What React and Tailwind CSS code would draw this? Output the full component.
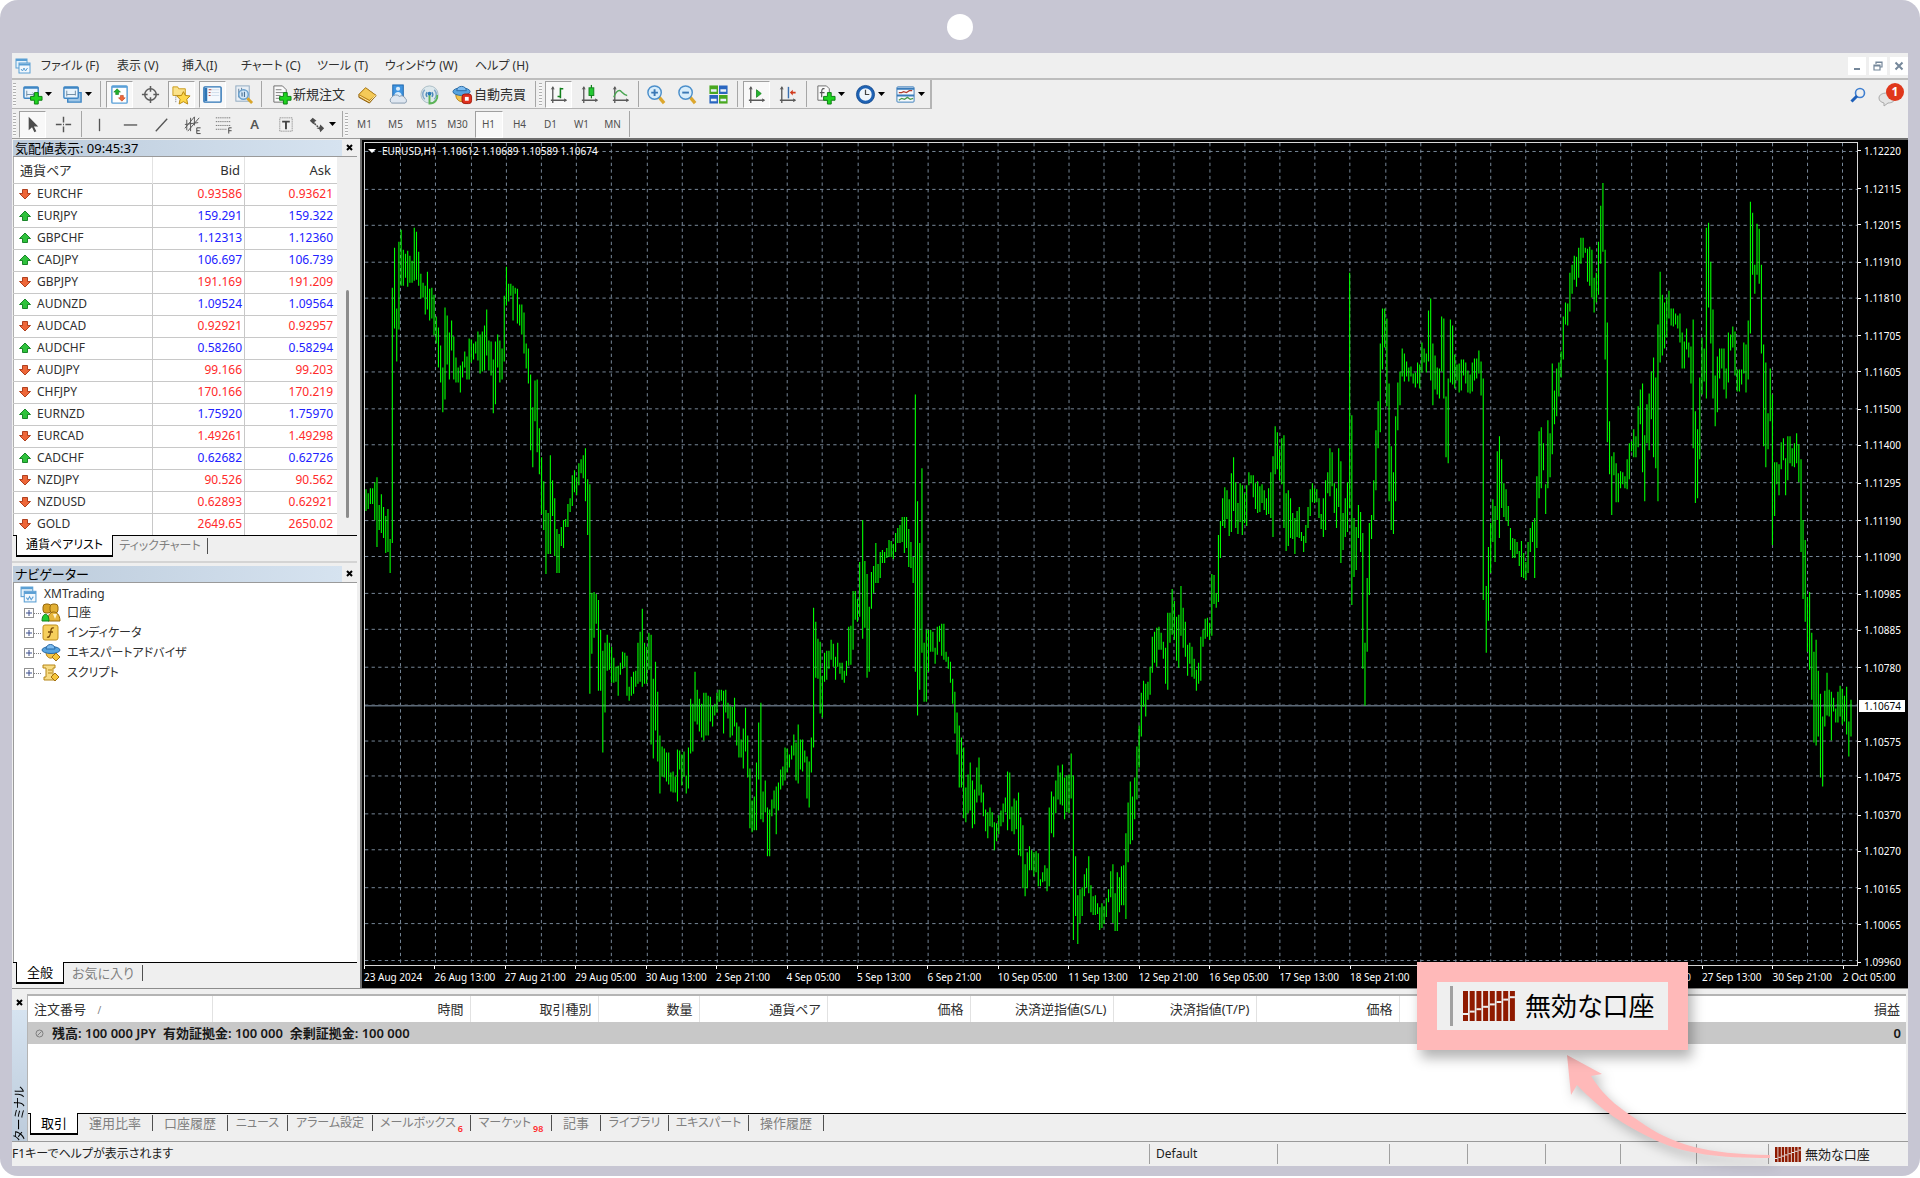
import React, { useState } from 'react';
import clsx from 'clsx';

const quotes = [
  { symbol: 'EURCHF', bid: '0.93586', ask: '0.93621', up: false },
  { symbol: 'EURJPY', bid: '159.291', ask: '159.322', up: true },
  { symbol: 'GBPCHF', bid: '1.12313', ask: '1.12360', up: true },
  { symbol: 'CADJPY', bid: '106.697', ask: '106.739', up: true },
  { symbol: 'GBPJPY', bid: '191.169', ask: '191.209', up: false },
  { symbol: 'AUDNZD', bid: '1.09524', ask: '1.09564', up: true },
  { symbol: 'AUDCAD', bid: '0.92921', ask: '0.92957', up: false },
  { symbol: 'AUDCHF', bid: '0.58260', ask: '0.58294', up: true },
  { symbol: 'AUDJPY', bid: '99.166', ask: '99.203', up: false },
  { symbol: 'CHFJPY', bid: '170.166', ask: '170.219', up: false },
  { symbol: 'EURNZD', bid: '1.75920', ask: '1.75970', up: true },
  { symbol: 'EURCAD', bid: '1.49261', ask: '1.49298', up: false },
  { symbol: 'CADCHF', bid: '0.62682', ask: '0.62726', up: true },
  { symbol: 'NZDJPY', bid: '90.526', ask: '90.562', up: false },
  { symbol: 'NZDUSD', bid: '0.62893', ask: '0.62921', up: false },
  { symbol: 'GOLD', bid: '2649.65', ask: '2650.02', up: false },
];

const prices = [
  1.1222, 1.12115, 1.12015, 1.1191, 1.1181, 1.11705, 1.11605, 1.115, 1.114, 1.11295, 1.1119, 1.1109,
  1.10985, 1.10885, 1.1078, 1.10675, 1.10575, 1.10475, 1.1037, 1.1027, 1.10165, 1.10065, 1.0996,
];

const times = [
  '23 Aug 2024', '26 Aug 13:00', '27 Aug 21:00', '29 Aug 05:00', '30 Aug 13:00', '2 Sep 21:00',
  '4 Sep 05:00', '5 Sep 13:00', '6 Sep 21:00', '10 Sep 05:00', '11 Sep 13:00', '12 Sep 21:00',
  '16 Sep 05:00', '17 Sep 13:00', '18 Sep 21:00', '20 Sep 05:00', '23 Sep 13:00', '24 Sep 21:00',
  '26 Sep 05:00', '27 Sep 13:00', '30 Sep 21:00', '2 Oct 05:00',
];

// H1 bars: from / to on the time axis, then high, low pairs
const segments = [
  { from: 366, to: 590, hl: [
    489,511,493,509,488,504,488,504,482,520,477,547,505,530,494,533,507,538,516,553,509,552,539,573,287,543,247,328,308,361,
    241,329,229,285,249,285,253,277,250,286,255,282,260,282,227,280,231,279,251,285,273,298,282,297,285,314,271,309,288,320,
    287,318,294,335,316,343,327,367,345,382,367,412,307,399,315,364,332,379,320,350,336,379,357,382,367,382,365,392,361,377,
    351,367,356,379,338,379,339,362,343,359,341,353,331,360,334,373,331,371,325,370,309,355,340,370,341,375,359,413,341,404,
    334,367,340,382,348,379,295,361,266,305,283,301,283,295,285,320,287,293,288,323,304,325,304,334,312,353,343,368,348,383,
    374,450,407,467,380,421,379,452,428,474,457,514,481,530,510,574,513,554,455,554,480,516,498,556,529,573,534,573,527,546,
    520,548,519,527,504,527,498,512,475,506,470,492,477,495,463,485,459,473,455,478,448,501,479,535,484,694] },
  { from: 592, to: 860, hl: [
    593,654,592,638,594,624,600,691,630,691,651,753,643,713,635,671,643,670,647,683,658,683,667,682,666,696,663,675,652,669,
    653,667,656,696,687,701,677,696,672,694,671,687,643,684,632,682,609,687,643,684,647,684,633,670,635,745,679,759,662,731,
    692,762,736,794,747,777,749,778,753,782,753,785,773,792,772,793,777,793,750,802,751,770,755,786,752,777,776,794,748,789,
    699,754,704,752,672,722,690,725,699,732,704,738,693,741,693,736,696,736,697,722,706,727,704,716,693,713,690,702,690,701,
    691,734,690,713,703,719,706,738,707,736,698,727,723,746,727,758,740,758,729,769,708,752,736,778,769,829,801,833,797,831,
    763,831,723,780,703,820,792,823,781,813,808,857,810,857,800,817,791,809,787,835,783,811,770,790,767,786,748,781,749,773,
    755,768,746,760,735,756,743,781,725,784,740,770,740,772,751,763,757,799,762,808,738,773,608,748,622,678,639,679,642,714,
    676,718,653,682,651,680,651,669,640,660,644,667,657,680,643,667,663,674,663,680,671,683,661,676,627,666,626,665,591,650,
    591,620,599,622,562,617] },
  { from: 863, to: 1120, hl: [
    520,639,561,628,574,678,607,672,572,609,566,593,543,583,564,583,552,578,550,563,552,563,548,558,540,557,541,557,544,559,
    533,552,528,543,525,543,517,542,517,553,517,548,529,567,542,568,557,583,394,672,501,716,543,690,468,653,643,702,630,702,
    630,672,630,652,632,652,648,664,627,655,626,642,624,656,624,660,652,662,657,669,662,683,679,704,692,734,713,755,726,788,
    738,788,748,819,788,823,775,814,763,811,781,829,790,825,768,803,758,796,785,803,793,817,810,832,813,839,808,827,813,828,
    823,851,824,842,816,835,811,827,804,823,798,813,772,831,773,820,807,832,799,835,801,830,793,856,818,857,826,889,865,897,
    853,889,847,871,851,871,853,877,852,873,854,887,880,887,873,883,866,882,869,892,808,887,792,834,797,838,781,814,766,800,
    773,805,765,806,778,820,776,813,775,814,754,799,776,941,857,917,896,945,890,924,888,917,875,897,869,888,857,894,886,913,
    897,916,896,916,904,915,908,931,904,929,907,925,899,918,890,903,872,898,865,924,894,932,873,932,878,913] },
  { from: 1122, to: 1219, hl: [
    867,906,866,906,834,920,803,863,782,845,797,841,778,820,747,800,726,768,693,737,681,707,684,717,682,700,667,695,637,673,
    632,663,628,667,627,650,633,650,642,659,648,684,613,690,613,643,589,635,601,640,617,661,615,668,586,636,608,648,622,657,
    645,676,643,664,647,677,659,679,670,691,663,684,637,681,630,647,619,639,618,637,623,640,574,636,575,604,593,608,535,602] },
  { from: 1221, to: 1484, hl: [
    521,558,498,526,487,528,490,519,499,536,473,532,457,511,482,528,503,534,483,522,485,535,493,523,485,526,472,485,475,483,
    475,497,483,509,481,513,486,512,484,503,490,510,498,515,488,514,472,518,456,537,426,474,432,469,449,480,438,484,435,528,
    493,551,490,546,498,538,513,539,518,554,511,537,507,538,532,541,536,552,525,543,507,528,489,516,483,502,488,503,489,502,
    498,518,514,529,498,537,480,530,472,493,448,496,452,486,483,513,488,528,448,507,461,563,513,550,498,537,482,532,272,508,
    415,605,518,577,527,570,505,538,512,552,533,669,643,706,578,652,523,595,515,539,480,520,430,490,401,448,343,432,308,369,
    308,347,318,406,383,501,446,530,472,534,416,501,382,430,371,405,348,376,353,381,361,376,367,381,366,376,373,383,372,387,
    362,383,364,388,342,372,348,362,353,372,310,361,298,380,343,405,355,389,367,394,368,398,316,371,318,398,396,457,378,463,
    319,382,325,384,354,388,364,380,363,392,359,390,359,375,362,383,370,392,374,393,362,391,358,380,358,378,350,373,361,395,
    378,600] },
  { from: 1487, to: 1802, hl: [
    586,653,547,621,523,573,499,542,506,562,451,520,436,538,459,508,483,517,489,521,506,526,528,550,538,558,539,558,542,554,
    551,566,541,577,553,578,562,580,542,573,528,552,522,542,518,578,476,548,431,498,427,488,443,470,484,514,420,488,433,477,
    363,454,390,424,368,416,362,396,351,377,316,359,302,324,303,325,272,311,264,293,255,279,256,286,247,277,237,263,237,257,
    247,252,248,281,246,285,249,297,277,312,272,302,241,294,205,263,182,251,249,359,322,442,421,474,456,515,452,475,463,502,
    473,502,471,488,472,484,476,488,459,489,443,479,441,451,429,457,436,457,406,447,389,424,383,472,435,501,404,443,393,450,
    371,419,357,457,377,468,324,501,271,362,294,355,302,348,297,337,290,318,308,325,308,326,313,324,315,328,313,342,332,368,
    341,368,328,349,342,357,346,383,319,448,411,503,429,498,377,459,337,394,348,381,227,398,222,307,261,343,309,398,375,426,
    356,412,348,378,348,368,348,389,368,398,332,382,334,350,326,347,331,375,369,391,369,391,369,384,342,373,344,392,320,379,
    201,333,212,274,264,293,223,274,228,283,264,353,344,446,362,467,413,449,368,421,394,545,462,516,462,484,464,495,442,469,
    438,460,458,495,436,480,436,463,448,466,443,467,433,463,444,482,459,552] },
  { from: 1804, to: 1852, hl: [
    520,599,540,622,597,652,592,670,633,700,652,743,640,746,671,737,694,778,717,787,691,727,673,716,690,717,692,741,698,712,
    709,723,692,723,686,717,689,725,696,722,687,735,722,757,700,737] },
];

const PLOT_W = 1493;
const PLOT_H = 824;
const ORIGIN_X = 365;
const ORIGIN_Y = 142;

const priceY = (p) => 9 + (1.1222 - p) * 35900;

const barsPath = segments
  .map(({ from, to, hl }) => {
    const n = hl.length / 2;
    const step = (to - from) / (n - 1);
    let d = '';
    for (let i = 0; i < n; i++) {
      const x = (from + i * step - ORIGIN_X).toFixed(2);
      d += `M${x} ${hl[i * 2] - ORIGIN_Y}V${hl[i * 2 + 1] - ORIGIN_Y}`;
    }
    return d;
  })
  .join('');

/* ---------- icons ---------- */

const Svg = ({ size = 21, children, className }) => (
  <svg width={size} height={size} viewBox="0 0 22 22" fill="none" className={clsx('shrink-0', className)} aria-hidden="true">
    {children}
  </svg>
);

const Plus = ({ x = 8, y = 8 }) => (
  <path transform={`translate(${x} ${y})`} d="M5 1h4v4h4v4H9v4H5V9H1V5h4z" fill="#1fd41f" stroke="#0b7d12" strokeWidth="1" />
);

const Axes = () => (
  <g stroke="#5a5a5a" strokeWidth="1.4">
    <path d="M5 3v17M3 17h16" />
    <path d="M3.5 5.500L5 3l1.500 2.500M17 15.500L19.500 17 17 18.500" fill="#5a5a5a" strokeWidth="0.800" />
  </g>
);

const icons = {
  newChart: (
    <Svg>
      <rect x="2" y="3" width="15" height="12" rx="1" fill="#eaf4fc" stroke="#3f86c4" strokeWidth="1.500" />
      <path d="M2 4h15" stroke="#3f86c4" strokeWidth="2" />
      <path d="M5 7v6M5 11h8M11 9l2 2-2 2" stroke="#6d8ba3" />
      <Plus />
    </Svg>
  ),
  profiles: (
    <Svg>
      <path d="M6 15v4h14V9h-3" fill="#9fc6e6" stroke="#3f86c4" strokeWidth="1.500" />
      <rect x="2" y="3" width="15" height="12" rx="1" fill="#eaf4fc" stroke="#3f86c4" strokeWidth="1.500" />
      <path d="M2 4h15" stroke="#3f86c4" strokeWidth="2" />
      <path d="M5 7v6M5 11h9M14 7v5" stroke="#6d8ba3" />
    </Svg>
  ),
  marketWatch: (
    <Svg>
      <rect x="3" y="2" width="16" height="18" rx="1" fill="#fff" stroke="#5aa0d8" strokeWidth="1.500" />
      <path d="M3 3h16" stroke="#5aa0d8" strokeWidth="2" />
      <path d="M8.500 5l3.500 3.500h-2v2.500H7V8.500H5z" fill="#22b02c" stroke="#0d7a1a" strokeWidth="0.600" />
      <path d="M13.500 18l-3.500-3.500h2V12h3v2.500h2z" fill="#f0683a" stroke="#b93a12" strokeWidth="0.600" />
    </Svg>
  ),
  dataWindow: (
    <Svg>
      <circle cx="11" cy="11" r="6" stroke="#5d5d5d" strokeWidth="1.600" />
      <path d="M11 2v6M11 14v6M2 11h6M14 11h6" stroke="#5d5d5d" strokeWidth="1.600" />
    </Svg>
  ),
  navigator: (
    <Svg>
      <path d="M2 3h5l1 2h7v7H2z" fill="#fbe28a" stroke="#c99a1c" />
      <path d="M5 12v8" stroke="#777" strokeDasharray="1 1" />
      <path d="M13 8l2 4 5 .5-3.500 3.500 1 5-4.500-2.500L8.500 21l1-5L6 12.500l5-.5z" fill="#ffd84a" stroke="#b88710" />
    </Svg>
  ),
  terminal: (
    <Svg>
      <rect x="2" y="3" width="18" height="16" rx="1" fill="#f5f9fd" stroke="#2d74b5" strokeWidth="1.500" />
      <path d="M4 4v14" stroke="#2d74b5" strokeWidth="3" />
      <path d="M7 6h3M7 9h2M7 12h2" stroke="#b04040" />
      <path d="M10 6h8M10 9h8M10 12h8" stroke="#cfdcea" />
    </Svg>
  ),
  tester: (
    <Svg>
      <rect x="3" y="2" width="14" height="16" fill="#e9eff5" stroke="#8fa9c0" />
      <path d="M6 5v9M9 4v6M12 6v5" stroke="#5f7f9c" />
      <circle cx="11" cy="11" r="5" fill="#cfe6f8" fillOpacity="0.800" stroke="#6aa0cc" strokeWidth="1.500" />
      <path d="M9.500 9v4M12 8.500v5" stroke="#4b7396" strokeWidth="1.200" />
      <path d="M15 15l5 5" stroke="#d9a52a" strokeWidth="3" />
    </Svg>
  ),
  newOrder: (
    <Svg>
      <path d="M3 2h9l4 4v13H3z" fill="#fafafa" stroke="#6c6c6c" />
      <path d="M5 6h6M5 9h8M5 12h5M5 15h4" stroke="#7d7d7d" />
      <Plus />
    </Svg>
  ),
  gold: (
    <Svg>
      <path d="M2 11l7-7 11 8-7 8L2 14z" fill="#c98a16" stroke="#8c5c08" />
      <path d="M2 11l7-7 11 8-7 5z" fill="#f4ca58" stroke="#a4700e" strokeWidth="0.600" />
      <path d="M2.500 12.500l10.500 6 6.500-6.500" stroke="#fff0b8" />
    </Svg>
  ),
  community: (
    <Svg>
      <rect x="5" y="1" width="11" height="13" fill="#3f94e0" stroke="#1c66ad" />
      <circle cx="10.500" cy="5" r="2.200" fill="#d8ecfc" />
      <path d="M6.500 13c0-6 8-6 8 0z" fill="#d8ecfc" />
      <path d="M4 20a3.500 3.500 0 010-6 5 5 0 018-1 4 4 0 016 2 3 3 0 010 5z" fill="#dfe7f1" stroke="#8398ad" />
    </Svg>
  ),
  signals: (
    <Svg>
      <circle cx="11" cy="11" r="9" fill="#dde8ec" stroke="#a9bcc4" />
      <path d="M6 16a7 7 0 010-10M16 16a7 7 0 000-10" stroke="#7fa6c8" strokeWidth="1.500" />
      <path d="M8.500 13.500a4 4 0 010-5M13.500 13.500a4 4 0 000-5" stroke="#4d88b8" strokeWidth="1.500" />
      <path d="M11 11v9.500c6 0 9-5 8-9" stroke="#5cb457" strokeWidth="2" />
      <circle cx="11" cy="10" r="2" fill="#2b7ab8" />
    </Svg>
  ),
  autoTrading: (
    <Svg>
      <path d="M4 11c0 10 13 10 13 0z" fill="#f3c34a" stroke="#b27d13" />
      <ellipse cx="10" cy="8" rx="9" ry="4" fill="#57a4e0" stroke="#2a6aa5" />
      <path d="M5 7c0-6 10-6 10 0z" fill="#7dbcf0" stroke="#2a6aa5" />
      <rect x="10.500" y="10.500" width="10" height="10" rx="3" fill="#e0301e" stroke="#a01a0c" />
      <rect x="13.500" y="13.500" width="4" height="4" fill="#fff" />
    </Svg>
  ),
  barChart: (
    <Svg>
      <Axes />
      <path d="M13 4v11M13 5h3M10 13h3" stroke="#12801c" strokeWidth="1.600" />
    </Svg>
  ),
  candles: (
    <Svg>
      <Axes />
      <path d="M13 1v14" stroke="#12801c" strokeWidth="1.300" />
      <rect x="10.500" y="4" width="5" height="8" fill="#22c832" stroke="#12801c" />
    </Svg>
  ),
  lineChart: (
    <Svg>
      <Axes />
      <path d="M4 14c3-8 6-8 8-6s3 4 6 4" stroke="#4aa552" strokeWidth="1.500" />
    </Svg>
  ),
  zoomIn: (
    <Svg>
      <path d="M13 13l6 7" stroke="#dca72e" strokeWidth="3.500" />
      <circle cx="9" cy="9" r="7" fill="#d8edfb" stroke="#4b8fcb" strokeWidth="1.500" />
      <path d="M5.500 9h7M9 5.500v7" stroke="#3a78b5" strokeWidth="2" />
    </Svg>
  ),
  zoomOut: (
    <Svg>
      <path d="M13 13l6 7" stroke="#dca72e" strokeWidth="3.500" />
      <circle cx="9" cy="9" r="7" fill="#d8edfb" stroke="#4b8fcb" strokeWidth="1.500" />
      <path d="M5.500 9h7" stroke="#3a78b5" strokeWidth="2" />
    </Svg>
  ),
  tile: (
    <Svg>
      <path d="M1.500 1.500h9v9h-9z" fill="#49a820" />
      <path d="M11.500 1.500h9v9h-9zM1.500 11.500h9v9h-9z" fill="#2a66c0" />
      <path d="M11.500 11.500h9v9h-9z" fill="#49a820" />
      <path d="M3 5.500h6v2.500H3zM13 5.500h6v2.500h-6zM3 15.500h6v2.500H3zM13 15.500h6v2.500h-6z" fill="#eaf2fa" />
    </Svg>
  ),
  autoScroll: (
    <Svg>
      <Axes />
      <path d="M11 6v8l5-4z" fill="#22b52e" stroke="#12801c" strokeWidth="0.800" />
    </Svg>
  ),
  shift: (
    <Svg>
      <Axes />
      <path d="M12 3v12" stroke="#3a6fb0" strokeWidth="1.500" />
      <path d="M13.500 9l3-3v2h3v2h-3v2z" fill="#d23a1c" />
    </Svg>
  ),
  indicators: (
    <Svg>
      <path d="M3 2h9l3 3v12H3z" fill="#fafafa" stroke="#6c6c6c" />
      <path d="M10 5c-3-1-3 2-3 4v5M5 9h5" stroke="#555" strokeWidth="1.200" />
      <Plus />
    </Svg>
  ),
  clock: (
    <Svg>
      <circle cx="11" cy="11" r="8" fill="#eef5fc" stroke="#1e62b4" strokeWidth="3" />
      <circle cx="11" cy="11" r="9.500" stroke="#0f4487" strokeWidth="0.800" />
      <path d="M11 6v5h4" stroke="#444" strokeWidth="1.300" />
    </Svg>
  ),
  template: (
    <Svg>
      <rect x="2" y="3" width="18" height="16" rx="1" fill="#f5f9fd" stroke="#3a7cba" />
      <path d="M2 5h18M2 12h18" stroke="#3a7cba" strokeWidth="2" />
      <path d="M4 9l3 0 2-1 3 1 3-2 3 0" stroke="#b23c2c" strokeWidth="1.300" />
      <path d="M4 17l3-2 3 1 3-2 3 2 3-1" stroke="#4a9a4c" strokeWidth="1.300" />
    </Svg>
  ),
  cursor: (
    <Svg>
      <path d="M7 3v14l3.500-3 2.500 5 2-1-2.500-5H17z" fill="#4d4d4d" />
    </Svg>
  ),
  crosshair: (
    <Svg>
      <path d="M11 3v6M11 13v6M3 11h6M13 11h6M10.500 11h1" stroke="#555" strokeWidth="1.500" />
    </Svg>
  ),
  vline: <Svg><path d="M11 5v13" stroke="#555" strokeWidth="1.400" /></Svg>,
  hline: <Svg><path d="M4 11.500h14" stroke="#555" strokeWidth="1.400" /></Svg>,
  trend: <Svg><path d="M5 18L17 5" stroke="#555" strokeWidth="1.400" /></Svg>,
  channel: (
    <Svg>
      <path d="M3 15L13 3M6 18L18 4M5 6v11M9 4v14M13 3v9M3 11l14-2" stroke="#555" />
      <path d="M19.500 14.500h-4v6h4M15.500 17.500h3" stroke="#444" />
    </Svg>
  ),
  fibo: (
    <Svg>
      <path d="M3 4h15M3 8h15M3 12h15M3 16h11" stroke="#555" strokeDasharray="1 1" />
      <path d="M19.500 14.500h-3v6M16.500 17.500h3" stroke="#444" />
    </Svg>
  ),
  textLabel: (
    <Svg>
      <rect x="5" y="4" width="13" height="14" stroke="#777" strokeDasharray="1 1" />
      <path d="M7.500 8h8M11.500 8v8" stroke="#444" strokeWidth="2" />
    </Svg>
  ),
  arrows: (
    <Svg>
      <path d="M7 4l4 3-2 1v3l-2-1-3-3z" fill="#4d4d4d" />
      <path d="M9 10l4 4" stroke="#4d4d4d" strokeWidth="1.500" strokeDasharray="2 1" />
      <path d="M15 11l4 4-4 4-1-3-3-1 3-1z" fill="#4d4d4d" />
    </Svg>
  ),
};

const Down = () => (
  <svg width="7" height="4" viewBox="0 0 7 4" className="shrink-0" aria-hidden="true"><path d="M0 0h7L3.500 4z" fill="#000" /></svg>
);

const AppIcon = ({ size = 16 }) => (
  <svg width={size} height={size} viewBox="0 0 16 16" fill="none" className="shrink-0" aria-hidden="true">
    <rect x="1" y="1" width="11" height="9" fill="#e6f2fb" stroke="#5a9fd4" />
    <path d="M1 2h11" stroke="#5a9fd4" strokeWidth="2" />
    <rect x="4" y="5" width="11" height="10" fill="#f2f8fd" stroke="#5a9fd4" />
    <path d="M4 6.500h11" stroke="#5a9fd4" strokeWidth="2" />
    <path d="M6 11l1.500 2 1.500-3 1.500 3 2-3" stroke="#5a9fd4" />
  </svg>
);

const Arrow = ({ up }) => (
  <svg width="12" height="12" viewBox="0 0 12 12" className="shrink-0" aria-hidden="true">
    {up ? (
      <path d="M6 1l5.500 5.500H8.500v4h-5v-4H.5z" fill="#2fc23c" stroke="#0c7a1c" strokeWidth="0.900" />
    ) : (
      <path d="M6 11L.5 5.500h3v-4h5v4h3z" fill="#ee6638" stroke="#a83311" strokeWidth="0.900" />
    )}
  </svg>
);

const treeIcons = {
  accounts: (
    <svg width="20" height="20" viewBox="0 0 20 20" className="shrink-0" aria-hidden="true">
      <rect x="2" y="1" width="8" height="9" rx="3" fill="#d9a326" stroke="#96690c" />
      <rect x="9" y="1" width="8" height="9" rx="3" fill="#e3b136" stroke="#96690c" />
      <path d="M7 18c-1-12 12-12 12 0z" fill="#e6b63c" stroke="#96690c" />
      <path d="M1 18c0-9 7-9 7 0z" fill="#22cc30" stroke="#11801c" />
      <path d="M12 11l2 5 2-5" fill="#fff4cf" />
    </svg>
  ),
  indicators: (
    <svg width="20" height="20" viewBox="0 0 20 20" fill="none" className="shrink-0" aria-hidden="true">
      <rect x="2" y="2" width="15" height="15" rx="2" fill="#f6cf5c" stroke="#c08f1c" />
      <path d="M13 5c-3-1-3 2-3.500 5S8 15 6 14M7 9h5" stroke="#7a4c0a" strokeWidth="1.300" />
    </svg>
  ),
  experts: (
    <svg width="20" height="20" viewBox="0 0 20 20" className="shrink-0" aria-hidden="true">
      <path d="M5 9c0 8 9 8 9 1z" fill="#f3c34a" stroke="#b27d13" />
      <ellipse cx="10" cy="7" rx="9" ry="3.500" fill="#57a4e0" stroke="#2a6aa5" />
      <path d="M5 6c0-6 9-6 9 0z" fill="#7dbcf0" stroke="#2a6aa5" />
      <path d="M15 10l4 4-4 4-4-4z" fill="#f6c63c" stroke="#a4700e" />
    </svg>
  ),
  scripts: (
    <svg width="20" height="20" viewBox="0 0 20 20" className="shrink-0" aria-hidden="true">
      <path d="M2 2h12v3h-2v9h2v3H3v-3h2V5H2z" fill="#f8dc84" stroke="#b58618" />
      <path d="M7 7h4M7 10h4" stroke="#b58618" />
      <path d="M14 10l4 4-4 4-4-4z" fill="#f6c63c" stroke="#a4700e" />
    </svg>
  ),
};

const Strength = ({ className }) => (
  <svg viewBox="0 0 52 30" preserveAspectRatio="none" className={clsx('shrink-0', className)} aria-hidden="true">
    {[0, 1, 2, 3, 4, 5, 6, 7].map((i) => (
      <g key={i}>
        <rect x={i * 6.7} y="0" width="5" height="30" fill="#8f1a00" />
        <rect x={i * 6.7} y={22 - i * 2.4} width="5" height="2" fill="#efefef" />
      </g>
    ))}
  </svg>
);

/* ---------- toolbars ---------- */

const ToolButton = ({ icon, label, text, drop, pressed }) => (
  <button
    type="button"
    aria-label={text ? undefined : label}
    className={clsx(
      'flex h-[27px] items-center justify-center',
      text ? 'w-[88px] gap-px' : drop ? 'w-10 gap-[2px]' : 'w-[31px]'
    )}
  >
    {pressed ? (
      <span className="flex h-[27px] w-[27px] items-center justify-center border border-[#a0a0a0] border-r-white border-b-white bg-[#f8f8f8]">{icon}</span>
    ) : (
      icon
    )}
    {text && <span className="whitespace-nowrap">{text}</span>}
    {drop && <Down />}
  </button>
);

const Grip = () => <span className="mx-px h-[23px] w-[3px] shrink-0 bg-[repeating-linear-gradient(to_bottom,#b0b0b0_0_1px,#f8f8f8_1px_3px)]" />;

const Sep = ({ className = 'w-[5px]' }) => (
  <span className={clsx('flex shrink-0 justify-center', className)}>
    <span className="h-[26px] w-px bg-[#a6a6a6]" />
  </span>
);

const MenuBar = () => {
  const items = [
    ['ファイル (F)', 'w-[76px]'],
    ['表示 (V)', 'w-[65px]'],
    ['挿入(I)', 'w-[59px]'],
    ['チャート (C)', 'w-[76px]'],
    ['ツール (T)', 'w-[68px]'],
    ['ウィンドウ (W)', 'w-[90px]'],
    ['ヘルプ (H)', 'w-[70px]'],
  ];
  return (
    <div className="flex h-[27px] items-center border-b-2 border-[#bdbdbd]">
      <span className="flex w-[29px] pl-[3px]"><AppIcon /></span>
      <nav className="flex flex-1 text-[12px]">
        {items.map(([label, width]) => (
          <button key={label} type="button" className={clsx('text-left whitespace-nowrap', width)}>{label}</button>
        ))}
      </nav>
      <div className="flex gap-[3px] text-[#75879a]">
        <button type="button" aria-label="最小化" className="flex h-[18px] w-[18px] items-center justify-center bg-white">
          <svg width="12" height="12" viewBox="0 0 12 12"><path d="M3 9h6" stroke="currentColor" strokeWidth="2" /></svg>
        </button>
        <button type="button" aria-label="元に戻す" className="flex h-[18px] w-[18px] items-center justify-center bg-white">
          <svg width="12" height="12" viewBox="0 0 12 12" fill="none" stroke="currentColor" strokeWidth="1.200"><path d="M4 4V2h6v5H8M2 5h6v5H2zM2 6h6M4 2.500h6" /></svg>
        </button>
        <button type="button" aria-label="閉じる" className="flex h-[18px] w-[18px] items-center justify-center bg-white">
          <svg width="12" height="12" viewBox="0 0 12 12"><path d="M2.500 2.500l7 7M9.500 2.500l-7 7" stroke="currentColor" strokeWidth="2" /></svg>
        </button>
      </div>
    </div>
  );
};

const MainToolbar = () => (
  <div className="flex h-[30px] items-start">
    <div className="flex h-[29px] items-center border-r-2 border-b border-[#b4b4b4]">
      <Grip />
      <ToolButton icon={icons.newChart} label="新規チャート" drop />
      <ToolButton icon={icons.profiles} label="チャートの組表示" drop />
      <Sep className="w-[7px]" />
      <ToolButton icon={icons.marketWatch} label="気配値表示" pressed />
      <ToolButton icon={icons.dataWindow} label="データウィンドウ" />
      <ToolButton icon={icons.navigator} label="ナビゲーター" pressed />
      <ToolButton icon={icons.terminal} label="ターミナル" pressed />
      <ToolButton icon={icons.tester} label="ストラテジーテスター" />
      <Sep />
      <ToolButton icon={icons.newOrder} text="新規注文" />
      <ToolButton icon={icons.gold} label="メタエディター" />
      <ToolButton icon={icons.community} label="コミュニティ" />
      <ToolButton icon={icons.signals} label="シグナル" />
      <ToolButton icon={icons.autoTrading} text="自動売買" />
      <Sep />
      <Grip />
      <ToolButton icon={icons.barChart} label="バーチャート" pressed />
      <ToolButton icon={icons.candles} label="ローソク足" />
      <ToolButton icon={icons.lineChart} label="ラインチャート" />
      <Sep />
      <ToolButton icon={icons.zoomIn} label="拡大" />
      <ToolButton icon={icons.zoomOut} label="縮小" />
      <ToolButton icon={icons.tile} label="整列" />
      <Sep className="w-[7px]" />
      <ToolButton icon={icons.autoScroll} label="自動スクロール" pressed />
      <ToolButton icon={icons.shift} label="チャートシフト" />
      <Sep className="w-[7px]" />
      <ToolButton icon={icons.indicators} label="インディケータ" drop />
      <ToolButton icon={icons.clock} label="時間足" drop />
      <ToolButton icon={icons.template} label="定型チャート" drop />
    </div>
    <div className="ml-auto flex h-[29px] items-center gap-3 pr-1">
      <button type="button" aria-label="検索">
        <svg width="16" height="16" viewBox="0 0 16 16" fill="none">
          <circle cx="10" cy="6" r="4.500" stroke="#3f7fd0" strokeWidth="1.600" />
          <path d="M7 9l-5.500 5.500" stroke="#1e5fb8" strokeWidth="3" />
        </svg>
      </button>
      <button type="button" aria-label="通知" className="relative h-6 w-[26px]">
        <svg width="18" height="16" viewBox="0 0 18 16" className="mt-2"><path d="M9 2c5 0 8 2 8 5s-3 5-7 5l-4 3v-3C3 11 1 10 1 7s3-5 8-5z" fill="#e4e4e4" stroke="#aaa" /></svg>
        <span className="absolute top-0 right-0 flex h-[18px] w-[18px] items-center justify-center rounded-full bg-[#e0371b] text-[12px] font-bold text-white">1</span>
      </button>
    </div>
  </div>
);

const DrawToolbar = () => {
  const [frame, setFrame] = useState('H1');
  return (
    <div className="flex h-[28px] items-center">
      <Grip />
      <ToolButton icon={icons.cursor} label="カーソル" pressed />
      <ToolButton icon={icons.crosshair} label="十字カーソル" />
      <Sep />
      <ToolButton icon={icons.vline} label="垂直線" />
      <ToolButton icon={icons.hline} label="水平線" />
      <ToolButton icon={icons.trend} label="トレンドライン" />
      <ToolButton icon={icons.channel} label="チャネル" />
      <ToolButton icon={icons.fibo} label="フィボナッチ" />
      <ToolButton icon={<span className="font-semibold text-[#555]">A</span>} label="テキスト" />
      <ToolButton icon={icons.textLabel} label="テキストラベル" />
      <ToolButton icon={icons.arrows} label="矢印" drop />
      <Sep className="w-[3px]" />
      <Grip />
      {['M1', 'M5', 'M15', 'M30', 'H1', 'H4', 'D1', 'W1', 'MN'].map((tf) => (
        <button key={tf} type="button" onClick={() => setFrame(tf)} className="flex h-[27px] w-[31px] justify-center text-[10px] text-[#505050]">
          <span
            className={clsx(
              'flex h-[27px] w-[28px] items-center justify-center border',
              frame === tf ? 'border-[#a0a0a0] border-r-white border-b-white bg-[#f8f8f8]' : 'border-transparent'
            )}
          >
            {tf}
          </span>
        </button>
      ))}
      <Sep className="w-[3px]" />
    </div>
  );
};

/* ---------- left panels ---------- */

const CloseButton = () => (
  <button type="button" aria-label="閉じる" className="flex h-4 w-[15px] items-center justify-center">
    <svg width="7" height="7" viewBox="0 0 7 7"><path d="M1 1l5 5M6 1L1 6" stroke="#000" strokeWidth="2" /></svg>
  </button>
);

const PanelTitle = ({ children }) => (
  <div className="flex h-[17px] items-center">
    <h2 className="h-4 flex-1 bg-linear-to-r from-[#bccbdb] to-[#d6e3f0] pl-[2px] leading-4 text-black">{children}</h2>
    <CloseButton />
  </div>
);

const SideTabs = ({ active, other, activeClass, otherClass }) => (
  <div className="flex h-[26px] items-start border-t border-black text-[#808080]">
    <button type="button" className={clsx('-mt-px ml-[3px] h-[22px] border-x border-b-2 border-black bg-white whitespace-nowrap text-black', activeClass)}>{active}</button>
    <button type="button" className={clsx('mt-[2px] h-4 border-r border-[#505050] leading-4 whitespace-nowrap', otherClass)}>{other}</button>
  </div>
);

const MarketWatch = () => (
  <section className="border-b-2 border-[#d4d4d4] pl-px">
    <PanelTitle>気配値表示: 09:45:37</PanelTitle>
    <div className="flex border-t border-[#9a9a9a]">
      <table className="w-[324px] table-fixed border-collapse border-l border-[#b0b0b0] bg-white text-[12px]">
        <colgroup>
          <col className="w-[139px]" />
          <col className="w-[92px]" />
          <col />
        </colgroup>
        <thead>
          <tr className="h-[26px] text-[13px] text-[#303030]">
            <th className="border-r border-[#e2e2e2] pl-[6px] text-left font-normal">通貨ペア</th>
            <th className="border-r border-[#e2e2e2] pr-1 text-right font-normal">Bid</th>
            <th className="pr-[6px] text-right font-normal">Ask</th>
          </tr>
        </thead>
        <tbody>
          {quotes.map((q) => (
            <tr key={q.symbol} className="h-[22px] border-t border-[#c8c8c8]">
              <td className="border-r border-[#c8c8c8] pl-[5px] text-[#303030]">
                <span className="flex items-center gap-[6px]"><Arrow up={q.up} />{q.symbol}</span>
              </td>
              <td className={clsx('border-r border-[#c8c8c8] pr-[2px] text-right', q.up ? 'text-[#2222ff]' : 'text-[#ff2a2a]')}>{q.bid}</td>
              <td className={clsx('pr-1 text-right', q.up ? 'text-[#2222ff]' : 'text-[#ff2a2a]')}>{q.ask}</td>
            </tr>
          ))}
        </tbody>
      </table>
      <div className="flex flex-1 flex-col items-center pt-[133px]">
        <span className="h-[228px] w-[3px] rounded-full bg-[#8c8c8c]" />
      </div>
    </div>
    <SideTabs active="通貨ペアリスト" other="ティックチャート" activeClass="w-[97px] text-[12px]" otherClass="w-[95px] text-[12px]" />
  </section>
);

const Navigator = () => {
  const nodes = [
    ['accounts', '口座'],
    ['indicators', 'インディケータ'],
    ['experts', 'エキスパートアドバイザ'],
    ['scripts', 'スクリプト'],
  ];
  return (
    <section className="flex flex-1 flex-col pt-[2px] pl-px">
      <PanelTitle>ナビゲーター</PanelTitle>
      <div className="flex-1 border-t border-l border-[#9a9a9a] bg-white pt-[2px] text-[12px] text-[#303030]">
        <div className="flex h-[18px] items-center gap-[7px] pl-[6px]"><AppIcon size={17} />XMTrading</div>
        <ul className="pl-[10px]">
          {nodes.map(([key, label]) => (
            <li key={key} className="flex h-5 items-center">
              <button type="button" aria-label={label} className="flex h-[10px] w-[10px] items-center justify-center border border-[#919191] bg-white">
                <svg width="6" height="6" viewBox="0 0 6 6"><path d="M3 0v6M0 3h6" stroke="#3b4c8c" /></svg>
              </button>
              <span className="w-[7px] border-t border-dotted border-[#808080]" />
              {treeIcons[key]}
              <span className="pl-[6px] whitespace-nowrap">{label}</span>
            </li>
          ))}
        </ul>
      </div>
      <SideTabs active="全般" other="お気に入り" activeClass="w-[48px]" otherClass="w-[79px]" />
    </section>
  );
};

/* ---------- chart ---------- */

const Chart = () => (
  <section aria-label="EURUSD,H1" className="flex min-w-0 flex-1 flex-col border-t-2 border-l-2 border-[#6e6e6e] bg-black pt-[2px] pl-[2px] text-[10px] text-white">
    <div className="flex flex-1">
      <div className="relative flex-1 border border-[#d8d8d8]">
        <svg viewBox={`0 0 ${PLOT_W} ${PLOT_H}`} preserveAspectRatio="none" className="absolute inset-0 h-full w-full">
          {prices.map((p) => (
            <path key={p} d={`M0 ${Math.round(priceY(p)) - 0.5}H${PLOT_W}`} stroke="#778899" strokeDasharray="3.300 3.300" />
          ))}
          {Array.from({ length: 42 }, (_, i) => (
            <path key={i} d={`M${Math.round((i + 1) * 35.19) + 0.5} 0V${PLOT_H}`} stroke="#778899" strokeDasharray="3.300 3.300" />
          ))}
          <path d={`M0 ${priceY(1.10674)}H${PLOT_W}`} stroke="#5d6a78" strokeWidth="1.500" />
          <path d={barsPath} stroke="#00ff00" strokeWidth="1.100" />
        </svg>
        <div className="relative flex items-center gap-[6px] pt-[1px] pl-[3px] leading-[14px] whitespace-pre">
          <svg width="8" height="4" viewBox="0 0 8 4"><path d="M0 0h8L4 4z" fill="#fff" /></svg>
          EURUSD,H1  1.10612 1.10689 1.10589 1.10674
        </div>
      </div>
      <div className="relative w-[50px]">
        {prices.map((p) => p !== 1.10675 && (
          <span
            key={p}
            className="absolute left-0 flex -translate-y-1/2 items-center gap-[3px] leading-none before:h-px before:w-[3px] before:bg-white"
            style={{ top: `${(priceY(p) / PLOT_H) * 100}%` }}
          >
            {p.toFixed(5)}
          </span>
        ))}
        <span
          className="absolute right-[3px] left-px -translate-y-1/2 bg-white py-px pl-[5px] leading-[10px] text-black"
          style={{ top: `${(priceY(1.10674) / PLOT_H) * 100}%` }}
        >
          1.10674
        </span>
      </div>
    </div>
    <div className="mr-[50px] flex h-[22px] leading-4">
      {times.map((t) => (
        <span key={t} className="w-[4.714%] shrink-0 whitespace-nowrap before:block before:h-[3px] before:w-px before:bg-white">{t}</span>
      ))}
    </div>
  </section>
);

/* ---------- terminal ---------- */

const Terminal = () => {
  const [tab, setTab] = useState('取引');
  const columns = [
    ['時間', 'w-[258px]'], ['取引種別', 'w-[128px]'], ['数量', 'w-[101px]'], ['通貨ペア', 'w-[128px]'],
    ['価格', 'w-[143px]'], ['決済逆指値(S/L)', 'w-[143px]'], ['決済指値(T/P)', 'w-[143px]'], ['価格', 'w-[143px]'],
    ['損益', ''],
  ];
  const tabs = [
    ['運用比率', 'w-[75px]'],
    ['口座履歴', 'w-[75px]'],
    ['ニュース', 'w-[60px] text-[12px]'],
    ['アラーム設定', 'w-[85px] text-[12px]'],
    ['メールボックス', 'w-[98px] text-[12px]', 6],
    ['マーケット', 'w-[81px] text-[12px]', 98],
    ['記事', 'w-[49px]'],
    ['ライブラリ', 'w-[68px] text-[12px]'],
    ['エキスパート', 'w-[80px] text-[12px]'],
    ['操作履歴', 'w-[75px]'],
  ];
  return (
    <section className="flex border-t border-[#8c8c8c] pt-[5px]">
      <div className="flex w-[15px] flex-col items-center">
        <CloseButton />
        <h2 className="flex w-full flex-1 rotate-180 items-center bg-linear-to-b from-[#bccbdb] to-[#d6e3f0] text-[12px] leading-[15px] whitespace-nowrap text-black [text-orientation:sideways] [writing-mode:vertical-rl]">
          ターミナル
        </h2>
      </div>
      <div className="mr-[2px] flex-1 border-t-2 border-l border-[#b4b4b4]">
        <div className="h-[117px] bg-white">
          <table className="w-full table-fixed border-collapse text-[#303030]">
            <colgroup>
              <col className="w-[184px]" />
              {columns.map(([, width], i) => <col key={i} className={width} />)}
            </colgroup>
            <thead>
              <tr className="h-[26px]">
                <th className="border-r border-[#e2e2e2] pl-[6px] text-left font-normal">注文番号 <span className="pl-2 text-[10px] text-[#808080]">/</span></th>
                {columns.map(([label], i) => (
                  <th key={i} className="border-r border-[#e2e2e2] pr-[6px] text-right font-normal whitespace-nowrap last:border-r-0">{label}</th>
                ))}
              </tr>
            </thead>
            <tbody>
              <tr className="h-[22px] bg-[#c8c8c8] font-semibold text-[#181818]">
                <td colSpan={9} className="pl-[7px] whitespace-pre">
                  <span className="flex items-center gap-2">
                    <svg width="9" height="9" viewBox="0 0 9 9" fill="none"><circle cx="4.500" cy="4.500" r="3.500" stroke="#808080" /><path d="M2.500 6.500l4-4" stroke="#808080" /></svg>
                    残高: 100 000 JPY  有効証拠金: 100 000  余剰証拠金: 100 000
                  </span>
                </td>
                <td className="pr-[5px] text-right">0</td>
              </tr>
            </tbody>
          </table>
        </div>
        <div className="flex h-[28px] items-start border-t border-black text-[#808080]">
          <button
            type="button"
            onClick={() => setTab('取引')}
            className={clsx('-mt-px ml-[2px] h-[22px] w-[48px] border-x border-b-2', tab === '取引' ? 'border-black bg-white text-black' : 'border-transparent')}
          >
            取引
          </button>
          {tabs.map(([label, width, count]) => (
            <button
              key={label}
              type="button"
              onClick={() => setTab(label)}
              className={clsx('mt-px flex h-4 items-end justify-center border-r border-[#505050] leading-4 whitespace-nowrap', width, tab === label && 'text-black')}
            >
              {label}
              {count && <span className="-mb-[3px] pl-[2px] text-[9px] leading-[10px] font-semibold text-[#ff2a2a]">{count}</span>}
            </button>
          ))}
        </div>
      </div>
    </section>
  );
};

const StatusBar = () => (
  <footer className="flex h-[25px] items-center border-t border-[#9a9a9a] text-[#202020]">
    <span className="flex-1 text-[12px] whitespace-nowrap">F1キーでヘルプが表示されます</span>
    <span className="flex h-5 w-[128px] items-center border-l border-[#a0a0a0] pl-[6px] text-[12px]">Default</span>
    <span className="h-5 w-[112px] border-l border-[#a0a0a0]" />
    <span className="h-5 w-[78px] border-l border-[#a0a0a0]" />
    <span className="h-5 w-[78px] border-l border-[#a0a0a0]" />
    <span className="h-5 w-[75px] border-l border-[#a0a0a0]" />
    <span className="h-5 w-[76px] border-l border-[#a0a0a0]" />
    <span className="h-5 w-[72px] border-l border-[#a0a0a0]" />
    <span className="flex h-5 w-[140px] items-center gap-1 border-l border-[#a0a0a0] pl-[6px] whitespace-nowrap">
      <Strength className="h-[15px] w-[26px]" />無効な口座
    </span>
  </footer>
);

// magnified status cell with an arrow that points back at it
const Callout = () => (
  <div className="pointer-events-none absolute right-[138px] bottom-[-10px] h-[214px] w-[353px]">
    <svg width="353" height="214" viewBox="0 0 353 214" className="absolute inset-0 overflow-visible drop-shadow-[4px_6px_6px_rgba(0,0,0,0.25)]" aria-hidden="true">
      <path
        d="M150 93L185 112L174 114C190 139 205 147 222 159C255 183 290 192 353 193V196C300 196 270 192 240 179C205 162 185 149 160 123L154 133Z"
        fill="#ffb9b9"
      />
    </svg>
    <div className="relative flex h-[88px] w-[271px] bg-[#ffb9b9] p-5 text-black shadow-[4px_8px_12px_rgba(0,0,0,0.3)]">
      <div className="flex flex-1 items-center bg-[#efefef] pl-[13px] text-[26px] leading-none whitespace-nowrap">
        <span className="h-10 w-[3px] bg-[#a0a0a0]" />
        <Strength className="mx-[10px] h-[30px] w-[52px]" />
        無効な口座
      </div>
    </div>
  </div>
);

const App = () => (
  <div className="min-h-screen bg-white font-['Noto_Sans','Noto_Sans_CJK_JP',sans-serif] text-[13px] leading-[18px] [font-feature-settings:'palt']">
    <div className="flex min-h-[calc(100vh-2px)] flex-col rounded-[18px] bg-[#c7c6d3] px-3 pb-[10px]">
      <div className="flex h-[53px] items-center justify-center">
        <span className="h-[26px] w-[26px] rounded-full bg-white" />
      </div>
      <div className="relative flex flex-1 flex-col bg-[#efefef] text-[#303030]">
        <MenuBar />
        <MainToolbar />
        <DrawToolbar />
        <main className="flex flex-1">
          <aside className="flex w-[348px] flex-col border-t border-[#9a9a9a] pr-[3px]">
            <MarketWatch />
            <Navigator />
          </aside>
          <Chart />
        </main>
        <Terminal />
        <StatusBar />
        <Callout />
      </div>
    </div>
  </div>
);

export default App;
